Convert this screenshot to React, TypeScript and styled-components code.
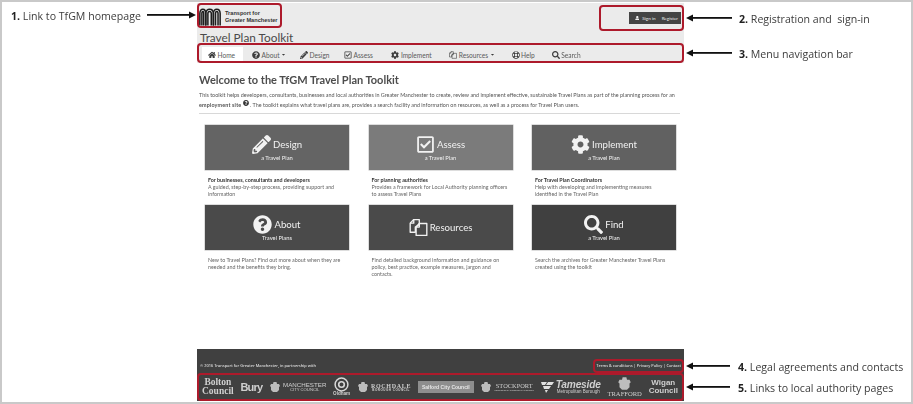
import React from 'react'
import styled, { createGlobalStyle } from 'styled-components'
import {
  FaCaretDown,
  FaCog,
  FaHome,
  FaPencilAlt,
  FaQuestionCircle,
  FaRegCheckSquare,
  FaRegLifeRing,
  FaSearch,
  FaUser,
} from 'react-icons/fa'

const GlobalStyle = createGlobalStyle`
  html, body {
    margin: 0;
    padding: 0;
    background: #fff;
    font-family: Lato, 'Open Sans', sans-serif;
    overflow: hidden;
  }
`

const Frame = styled.div`
  position: relative;
  box-sizing: border-box;
  width: 913px;
  height: 404px;
  border: 2px solid #c9c9c9;
  background: #fff;
  padding: 1px 0 0 195px;
  overflow: hidden;
`

const Page = styled.div`
  width: 487px;
  height: 398px;
  display: flex;
  flex-direction: column;
  filter: blur(0.35px);
  opacity: 0.999;
`

const Header = styled.header`
  height: 40px;
  background: #ebebeb;
  display: flex;
  flex-direction: column;
`

const HeaderTop = styled.div`
  height: 28px;
  flex: none;
  display: flex;
  justify-content: space-between;
  align-items: flex-start;
  padding: 4px 3px 0 2px;
  box-sizing: border-box;
`

const Logo = styled.a`
  display: flex;
  align-items: center;
  gap: 4px;
  color: #333;
`

const LogoText = styled.span`
  font-size: 5.6px;
  line-height: 7px;
  font-weight: 700;
  font-family: 'Liberation Sans', sans-serif;
`

const AccountBar = styled.div`
  display: flex;
  align-items: center;
  gap: 6px;
  height: 12px;
  margin-top: 5px;
  padding: 0 3px 0 6px;
  background: #444;
  color: #eee;
  font-size: 4.6px;
`

const AccountLink = styled.span`
  display: inline-flex;
  align-items: center;
  gap: 3px;
`

const Title = styled.h2`
  margin: 1px 0 0;
  padding: 0 0 0 3px;
  font-size: 11.8px;
  line-height: 11px;
  font-weight: 400;
  color: #4a4a4a;
`

const Nav = styled.nav`
  height: 20px;
  background: #ebebeb;
  display: flex;
  align-items: flex-end;
  padding: 0 0 1px 5px;
  box-sizing: border-box;
`

const NavItem = styled.a<{ $active?: boolean; $trim?: number }>`
  height: 15px;
  display: flex;
  align-items: center;
  gap: 1.5px;
  padding: 0 8px 0 6px;
  margin-right: ${(p) => 3 - (p.$trim ?? 0)}px;
  font-size: 6.6px;
  color: #5a5a5a;
  background: ${(p) => (p.$active ? '#fff' : 'transparent')};

  svg {
    color: #3d3d3d;
    font-size: 8px;
    flex: none;
  }

  svg + svg {
    font-size: 5px;
  }
`

const Main = styled.main`
  padding: 9px 4px 0 2px;
  flex: 1;
`

const Heading = styled.h1`
  margin: 0;
  font-size: 11px;
  line-height: 16px;
  font-weight: 700;
  color: #4d4d4d;
`

const Intro = styled.p`
  margin: 3px 0 0;
  font-size: 5.42px;
  line-height: 8.5px;
  color: #555;
  white-space: nowrap;

  strong {
    letter-spacing: 0.15px;
  }

  svg {
    font-size: 6px;
    color: #333;
    vertical-align: 1px;
  }
`

const Rule = styled.hr`
  margin: 3.5px 0 0;
  border: 0;
  border-top: 1px solid #d8d8d8;
`

const Cards = styled.div`
  display: grid;
  grid-template-columns: repeat(3, 144px);
  grid-auto-rows: 80px;
  column-gap: 19.5px;
  padding: 11.5px 0 0 6px;
`

const CardCell = styled.div`
  display: flex;
  flex-direction: column;
`

const Tile = styled.a<{ $bg: string }>`
  height: 45px;
  flex: none;
  background: ${(p) => p.$bg};
  box-shadow: 0 0 0 0.5px #bbb;
  color: #f2f2f2;
  display: flex;
  flex-direction: column;
  align-items: center;
  justify-content: center;
`

const TileTitle = styled.div`
  display: flex;
  align-items: center;
  gap: 2px;
  font-size: 9.6px;
  line-height: 19px;

  svg {
    flex: none;
    font-size: 19px;
  }
`

const TileSub = styled.div`
  font-size: 5.8px;
  line-height: 7px;
`

const CardText = styled.p`
  margin: 6.5px 0 0 3px;
  width: 136px;
  font-size: 5.35px;
  line-height: 7.4px;
  color: #666;

  strong {
    display: block;
    color: #333;
    font-weight: 700;
  }
`

const Footer = styled.footer`
  height: 52px;
  background: #404040;
  color: #ddd;
  display: flex;
  flex-direction: column;
`

const LegalRow = styled.div`
  height: 24px;
  flex: none;
  display: flex;
  justify-content: space-between;
  align-items: flex-end;
  padding: 0 3px 4px 3px;
  box-sizing: border-box;
  font-family: 'Open Sans', sans-serif;
  font-size: 3.9px;
  line-height: 6px;
  font-weight: 600;
`

const Councils = styled.div`
  flex: 1;
  display: flex;
  align-items: center;
  justify-content: space-between;
  padding: 0 6px 0 5px;
  color: #cfcfcf;
`

const Stack = styled.span`
  display: flex;
  flex-direction: column;
  align-items: center;
`

const Serif = styled.span<{ $size: number; $weight?: number; $spacing?: number }>`
  font-family: 'Liberation Serif', serif;
  font-size: ${(p) => p.$size}px;
  line-height: 1;
  font-weight: ${(p) => p.$weight ?? 400};
  letter-spacing: ${(p) => p.$spacing ?? 0}px;
`

const Sans = styled.span<{ $size: number; $weight?: number; $spacing?: number; $italic?: boolean }>`
  font-family: 'Liberation Sans', sans-serif;
  font-size: ${(p) => p.$size}px;
  line-height: 1;
  font-weight: ${(p) => p.$weight ?? 400};
  letter-spacing: ${(p) => p.$spacing ?? 0}px;
  font-style: ${(p) => (p.$italic ? 'italic' : 'normal')};
`

const Crest = styled.span`
  display: inline-flex;
  align-items: center;
  gap: 2px;
`

const SalfordBox = styled.span`
  background: #8e8e8e;
  color: #e6e6e6;
  padding: 3px 4px;
  font-size: 5px;
  font-weight: 700;
  font-family: 'Liberation Sans', sans-serif;
`

const Callout = styled.div<{ $x: number; $y: number; $w: number; $h: number }>`
  position: absolute;
  left: ${(p) => p.$x - 2}px;
  top: ${(p) => p.$y - 2}px;
  width: ${(p) => p.$w}px;
  height: ${(p) => p.$h}px;
  box-sizing: border-box;
  border: 2px solid #ad1a2b;
  border-radius: 4px;
`

const Label = styled.div<{ $x: number; $y: number }>`
  position: absolute;
  left: ${(p) => p.$x - 2}px;
  top: ${(p) => p.$y - 10}px;
  font-family: 'Open Sans', sans-serif;
  font-size: 10.6px;
  line-height: 18px;
  white-space: pre;
  color: #3c3c3c;

  b {
    font-weight: 700;
    color: #222;
  }
`

const ArrowSvg = styled.svg<{ $x: number; $y: number }>`
  position: absolute;
  left: ${(p) => p.$x - 2}px;
  top: ${(p) => p.$y - 8}px;
`

const FilesIcon = () => (
  <svg width="1em" height="1em" viewBox="0 0 24 24" fill="none" stroke="currentColor" strokeWidth="1.7" strokeLinejoin="round">
    <path d="M6 2h7v6l-5 3.500v6.500H1.500V6.500z" />
    <path d="M1.500 6.500H6V2" />
    <path d="M13 7h9.500v15H9V11.500z" />
    <path d="M9 11.500h4V7" />
  </svg>
)

const TfgmMark = () => (
  <svg width="22" height="20" viewBox="0 0 26 22" fill="none" stroke="#1e1e1e" strokeWidth="1.8">
    <path d="M1 21V7c0-7 7-7 7 0v14" />
    <path d="M3.400 21V7c0-3.500 2.200-3.500 2.200 0v14" />
    <path d="M8 21V7c0-7 9-7 9 0v14" />
    <path d="M10.500 21V7c0-3.500 4-3.500 4 0v14" />
    <path d="M17 21V7c0-7 8-7 8 0v14" />
    <path d="M19.500 21V7c0-3.500 3-3.500 3 0v14" />
  </svg>
)

const Shield = ({ size = 12 }: { size?: number }) => (
  <svg width={size} height={size} viewBox="0 0 12 12" fill="#bdbdbd">
    <path d="M4.500 1h3l.5 2h2l1 2-1 1v3l-2 2H4L2 9V6L1 5l1-2h2z" />
  </svg>
)

const OldhamMark = () => (
  <svg width="15" height="15" viewBox="0 0 15 15" fill="none" stroke="#d8d8d8">
    <circle cx="7.500" cy="7.500" r="6.400" strokeWidth="1.500" />
    <circle cx="7.500" cy="7.500" r="2.800" strokeWidth="1.600" />
  </svg>
)

const TamesideMark = () => (
  <svg width="13" height="12" viewBox="0 0 13 12" fill="#e0e0e0">
    <path d="M0 1h6L4 4H1zM7 1h6l-2 3H5zM2 5h8L8 8H3zM4 9h3l-2 3z" />
  </svg>
)

const Arrow = ({ x, y, length, toRight }: { x: number; y: number; length: number; toRight?: boolean }) => (
  <ArrowSvg $x={x} $y={y} width={length} height="12" viewBox={`0 0 ${length} 12`}>
    {toRight ? (
      <>
        <rect x="0" y="5" width={length - 5} height="1.800" fill="#111" />
        <path d={`M${length} 6 L${length - 7} 2.500 L${length - 7} 9.500 Z`} fill="#111" />
      </>
    ) : (
      <>
        <rect x="5" y="5" width={length - 5} height="1.800" fill="#111" />
        <path d="M0 6 L7 2.500 L7 9.500 Z" fill="#111" />
      </>
    )}
  </ArrowSvg>
)

const navItems = [
  { label: 'Home', icon: <FaHome />, active: true },
  { label: 'About', icon: <FaQuestionCircle />, caret: true, trim: 3 },
  { label: 'Design', icon: <FaPencilAlt />, trim: 2.5 },
  { label: 'Assess', icon: <FaRegCheckSquare />, trim: -1.5 },
  { label: 'Implement', icon: <FaCog />, trim: -0.5 },
  { label: 'Resources', icon: <FilesIcon />, caret: true },
  { label: 'Help', icon: <FaRegLifeRing /> },
  { label: 'Search', icon: <FaSearch /> },
]

const cards = [
  {
    title: 'Design',
    sub: 'a Travel Plan',
    bg: '#646464',
    icon: <FaPencilAlt />,
    lead: 'For businesses, consultants and developers',
    text: 'A guided, step-by-step process, providing support and information',
  },
  {
    title: 'Assess',
    sub: 'a Travel Plan',
    bg: '#7b7b7b',
    icon: <FaRegCheckSquare />,
    lead: 'For planning authorities',
    text: 'Provides a framework for Local Authority planning officers to assess Travel Plans',
  },
  {
    title: 'Implement',
    sub: 'a Travel Plan',
    bg: '#616161',
    icon: <FaCog />,
    lead: 'For Travel Plan Coordinators',
    text: 'Help with developing and implementing measures identified in the Travel Plan',
  },
  {
    title: 'About',
    sub: 'Travel Plans',
    bg: '#4a4a4a',
    icon: <FaQuestionCircle />,
    text: 'New to Travel Plans? Find out more about when they are needed and the benefits they bring.',
  },
  {
    title: 'Resources',
    bg: '#4a4a4a',
    icon: <FilesIcon />,
    text: 'Find detailed background information and guidance on policy, best practice, example measures, jargon and contacts.',
  },
  {
    title: 'Find',
    sub: 'a Travel Plan',
    bg: '#404040',
    icon: <FaSearch />,
    text: 'Search the archives for Greater Manchester Travel Plans created using the toolkit',
  },
]

export default function App() {
  return (
    <Frame>
      <GlobalStyle />
      <Page>
        <Header>
          <HeaderTop>
            <Logo>
              <TfgmMark />
              <LogoText>
                Transport for
                <br />
                Greater Manchester
              </LogoText>
            </Logo>
            <AccountBar>
              <AccountLink>
                <FaUser /> Sign in
              </AccountLink>
              <AccountLink>Register</AccountLink>
            </AccountBar>
          </HeaderTop>
          <Title>Travel Plan Toolkit</Title>
        </Header>

        <Nav>
          {navItems.map((item) => (
            <NavItem key={item.label} $active={item.active} $trim={item.trim}>
              {item.icon}
              {item.label}
              {item.caret && <FaCaretDown />}
            </NavItem>
          ))}
        </Nav>

        <Main>
          <Heading>Welcome to the TfGM Travel Plan Toolkit</Heading>
          <Intro>
            This toolkit helps developers, consultants, businesses and local authorities in Greater Manchester to create, review and
            implement effective, sustainable Travel Plans as part of the planning process for an
            <br />
            <strong>employment site</strong> <FaQuestionCircle /> . The toolkit explains what travel plans are, provides a search
            facility and information on resources, as well as a process for Travel Plan users.
          </Intro>
          <Rule />
          <Cards>
            {cards.map((card) => (
              <CardCell key={card.title}>
                <Tile $bg={card.bg}>
                  <TileTitle>
                    {card.icon}
                    {card.title}
                  </TileTitle>
                  {card.sub && <TileSub>{card.sub}</TileSub>}
                </Tile>
                <CardText>
                  {card.lead && <strong>{card.lead}</strong>}
                  {card.text}
                </CardText>
              </CardCell>
            ))}
          </Cards>
        </Main>

        <Footer>
          <LegalRow>
            <span>© 2016 Transport for Greater Manchester, in partnership with</span>
            <span>Terms &amp; conditions | Privacy Policy | Contact</span>
          </LegalRow>
          <Councils>
            <Stack>
              <Serif $size={9.5} $weight={700}>Bolton</Serif>
              <Serif $size={9.5} $weight={700}>Council</Serif>
            </Stack>
            <Sans $size={11} $weight={700} $spacing={-0.8}>Bury</Sans>
            <Crest>
              <Shield />
              <Stack>
                <Sans $size={6.2}>MANCHESTER</Sans>
                <Sans $size={4.2}>CITY COUNCIL</Sans>
              </Stack>
            </Crest>
            <Stack>
              <OldhamMark />
              <Sans $size={4.6} $weight={700}>Oldham</Sans>
            </Stack>
            <Crest>
              <Shield />
              <Stack>
                <Serif $size={6} $weight={700} $spacing={0.7}>ROCHDALE</Serif>
                <Sans $size={3} $weight={700} $spacing={0.5}>BOROUGH COUNCIL</Sans>
              </Stack>
            </Crest>
            <SalfordBox>Salford City Council</SalfordBox>
            <Crest>
              <Shield />
              <Stack>
                <Serif $size={6.4}>STOCKPORT</Serif>
                <Sans $size={2.2}>METROPOLITAN BOROUGH COUNCIL</Sans>
              </Stack>
            </Crest>
            <Crest>
              <TamesideMark />
              <Stack>
                <Sans $size={10.2} $weight={700} $italic $spacing={-0.2}>Tameside</Sans>
                <Sans $size={4.5}>Metropolitan Borough</Sans>
              </Stack>
            </Crest>
            <Stack>
              <Shield size={15} />
              <Serif $size={6.6}>TRAFFORD</Serif>
            </Stack>
            <Stack>
              <Sans $size={8} $weight={700}>Wigan</Sans>
              <Sans $size={8} $weight={700}>Council</Sans>
            </Stack>
          </Councils>
        </Footer>
      </Page>

      <Callout $x={197} $y={3} $w={85} $h={25} />
      <Callout $x={599} $y={5} $w={85} $h={26} />
      <Callout $x={197} $y={43} $w={487} $h={20} />
      <Callout $x={593} $y={359} $w={91} $h={14} />
      <Callout $x={197} $y={373} $w={487} $h={28} />

      <Label $x={11} $y={15}><b>1.</b> Link to TfGM homepage</Label>
      <Label $x={739} $y={18}><b>2.</b> Registration and  sign-in</Label>
      <Label $x={739} $y={53}><b>3.</b> Menu navigation bar</Label>
      <Label $x={738} $y={366}><b>4.</b> Legal agreements and contacts</Label>
      <Label $x={738} $y={387}><b>5.</b> Links to local authority pages</Label>

      <Arrow x={147} y={15} length={49} toRight />
      <Arrow x={686} y={18} length={46} />
      <Arrow x={686} y={53} length={46} />
      <Arrow x={686} y={366} length={44} />
      <Arrow x={686} y={387} length={44} />
    </Frame>
  )
}
